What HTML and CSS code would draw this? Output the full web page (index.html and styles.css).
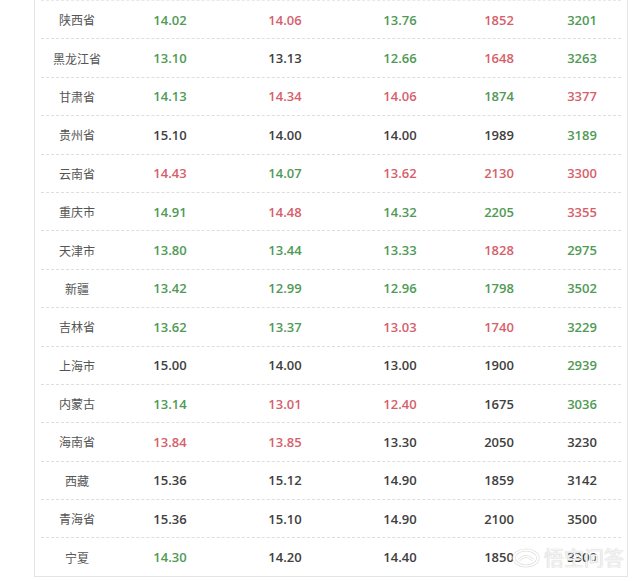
FILE: index.html
```html
<!DOCTYPE html>
<html lang="zh">
<head>
<meta charset="utf-8">
<link rel="stylesheet" href="styles.css">
</head>
<body>
<div class="page">
  <div class="table">
    <div class="row"><span class="name">陕西省</span><span class="g">14.02</span><span class="r">14.06</span><span class="g">13.76</span><span class="r">1852</span><span class="g">3201</span></div>
    <div class="row"><span class="name">黑龙江省</span><span class="g">13.10</span><span class="d">13.13</span><span class="g">12.66</span><span class="r">1648</span><span class="g">3263</span></div>
    <div class="row"><span class="name">甘肃省</span><span class="g">14.13</span><span class="r">14.34</span><span class="r">14.06</span><span class="g">1874</span><span class="r">3377</span></div>
    <div class="row"><span class="name">贵州省</span><span class="d">15.10</span><span class="d">14.00</span><span class="d">14.00</span><span class="d">1989</span><span class="g">3189</span></div>
    <div class="row"><span class="name">云南省</span><span class="r">14.43</span><span class="g">14.07</span><span class="r">13.62</span><span class="r">2130</span><span class="r">3300</span></div>
    <div class="row"><span class="name">重庆市</span><span class="g">14.91</span><span class="r">14.48</span><span class="g">14.32</span><span class="g">2205</span><span class="r">3355</span></div>
    <div class="row"><span class="name">天津市</span><span class="g">13.80</span><span class="g">13.44</span><span class="g">13.33</span><span class="r">1828</span><span class="g">2975</span></div>
    <div class="row"><span class="name">新疆</span><span class="g">13.42</span><span class="g">12.99</span><span class="g">12.96</span><span class="g">1798</span><span class="g">3502</span></div>
    <div class="row"><span class="name">吉林省</span><span class="g">13.62</span><span class="g">13.37</span><span class="r">13.03</span><span class="r">1740</span><span class="g">3229</span></div>
    <div class="row"><span class="name">上海市</span><span class="d">15.00</span><span class="d">14.00</span><span class="d">13.00</span><span class="d">1900</span><span class="g">2939</span></div>
    <div class="row"><span class="name">内蒙古</span><span class="g">13.14</span><span class="r">13.01</span><span class="r">12.40</span><span class="d">1675</span><span class="g">3036</span></div>
    <div class="row"><span class="name">海南省</span><span class="r">13.84</span><span class="r">13.85</span><span class="d">13.30</span><span class="d">2050</span><span class="d">3230</span></div>
    <div class="row"><span class="name">西藏</span><span class="d">15.36</span><span class="d">15.12</span><span class="d">14.90</span><span class="d">1859</span><span class="d">3142</span></div>
    <div class="row"><span class="name">青海省</span><span class="d">15.36</span><span class="d">15.10</span><span class="d">14.90</span><span class="d">2100</span><span class="d">3500</span></div>
    <div class="row"><span class="name">宁夏</span><span class="g">14.30</span><span class="d">14.20</span><span class="d">14.40</span><span class="d">1850</span><span class="d">3300</span></div>
  </div>
  <div class="watermark">
    <svg class="wm-logo" width="28" height="20" viewBox="0 0 28 20">
      <ellipse cx="14" cy="10" rx="12" ry="8" fill="none" stroke="#e2e2e2" stroke-width="3.2"/>
      <ellipse cx="14" cy="10" rx="12" ry="8" fill="none" stroke="#ffffff" stroke-width="1.6"/>
      <path d="M7 12 Q14 5 21 12" fill="none" stroke="#e2e2e2" stroke-width="3"/>
      <path d="M7 12 Q14 5 21 12" fill="none" stroke="#ffffff" stroke-width="1.4"/>
    </svg>
    <span class="wm-text">悟空问答</span>
  </div>
</div>
</body>
</html>
```
FILE: styles.css
```css
html, body {
  margin: 0;
  padding: 0;
  background: #ffffff;
}
.page {
  position: relative;
  width: 640px;
  height: 581px;
  overflow: hidden;
}
.table {
  margin-left: 34px;
  width: 594px;
  box-sizing: border-box;
  padding: 0 6px;
  border: 1px solid #e4e4e4;
  border-top: none;
}
.row {
  display: grid;
  grid-template-columns: 72px 114px 116px 114px 84px 82px;
  height: 38.4px;
  box-sizing: border-box;
  border-top: 1px dashed #dedede;
  align-items: center;
  text-align: center;
  font-family: "Open Sans", "Noto Sans", sans-serif;
  font-size: 13px;
  font-weight: 600;
}
.row:first-child {
  border-top-color: #e8e8e8;
}
.name {
  font-family: "Noto Sans CJK SC", sans-serif;
  font-size: 12px;
  font-weight: 400;
  color: #555555;
}
.g { color: #4f9a55; }
.r { color: #d65f6c; }
.d { color: #404040; }
.watermark {
  position: absolute;
  left: 512px;
  top: 546px;
  display: flex;
  align-items: center;
  gap: 4px;
  white-space: nowrap;
}
.wm-text {
  font-family: "Noto Sans CJK SC", sans-serif;
  font-size: 20px;
  line-height: 24px;
  color: rgba(255, 255, 255, 0.75);
  text-shadow: 0 0 1px #d0d0d0, 0 0 1px #d0d0d0;
}
```
